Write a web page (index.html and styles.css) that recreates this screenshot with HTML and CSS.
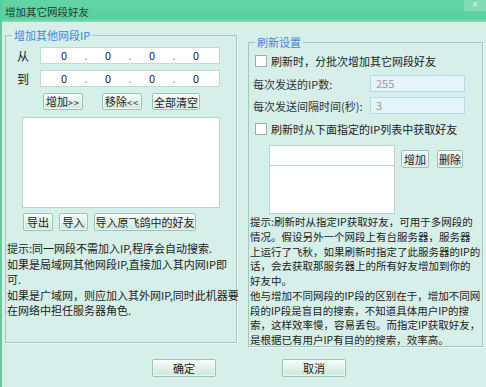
FILE: index.html
```html
<!DOCTYPE html>
<html lang="zh-CN">
<head>
  <meta charset="UTF-8" />
  <title>增加其它网段好友</title>
  <link rel="stylesheet" href="styles.css">
</head>
<body>

  <div class="window">
    <div class="titlebar">
      <span class="title">增加其它网段好友</span>
      <span class="close">×</span>
    </div>

    <div class="main">
      <!-- left: other segments -->
      <div class="group group-left">
        <span class="group-title">增加其他网段IP</span>

        <div class="iprow">
          <span class="iplabel">从</span>
          <div class="ipbox"><span>0</span><i>.</i><span>0</span><i>.</i><span>0</span><i>.</i><span>0</span></div>
        </div>
        <div class="iprow">
          <span class="iplabel">到</span>
          <div class="ipbox"><span>0</span><i>.</i><span>0</span><i>.</i><span>0</span><i>.</i><span>0</span></div>
        </div>

        <div class="btnrow btnrow-top">
          <button class="btn w40">增加<span class="arrows">&gt;&gt;</span></button>
          <button class="btn w40 gap-wide">移除<span class="arrows">&lt;&lt;</span></button>
          <button class="btn w48">全部清空</button>
        </div>

        <div class="listbox list-left"></div>

        <div class="btnrow btnrow-bottom">
          <button class="btn w30">导出</button>
          <button class="btn w29">导入</button>
          <button class="btn w102">导入原飞鸽中的好友</button>
        </div>

        <p class="tip tip-left">提示:同一网段不需加入IP,程序会自动搜索.<br>如果是局域网其他网段IP,直接加入其内网IP即<br>可.<br>如果是广域网，则应加入其外网IP,同时此机器要<br>在网络中担任服务器角色.</p>
      </div>

      <!-- right: refresh settings -->
      <div class="group group-right">
        <span class="group-title">刷新设置</span>

        <label class="check check-first"><span class="box"></span>刷新时，分批次增加其它网段好友</label>

        <div class="field">
          <span class="field-label">每次发送的IP数:</span>
          <div class="field-input">255</div>
        </div>
        <div class="field field-second">
          <span class="field-label">每次发送间隔时间(秒):</span>
          <div class="field-input">3</div>
        </div>

        <label class="check check-second"><span class="box"></span>刷新时从下面指定的IP列表中获取好友</label>

        <div class="iplist">
          <div class="iplist-col">
            <div class="iplist-input"></div>
            <div class="listbox list-right"></div>
          </div>
          <div class="iplist-btns">
            <button class="btn w28">增加</button>
            <button class="btn w26">删除</button>
          </div>
        </div>

        <p class="tip tip-right">提示:刷新时从指定IP获取好友，可用于多网段的<br>情况。假设另外一个网段上有台服务器，服务器<br>上运行了飞秋，如果刷新时指定了此服务器的IP的<br>话，会去获取那服务器上的所有好友增加到你的<br>好友中。<br>他与增加不同网段的IP段的区别在于，增加不同网<br>段的IP段是盲目的搜索，不知道具体用户IP的搜<br>索，这样效率慢，容易丢包。而指定IP获取好友，<br>是根据已有用户IP有目的的搜索，效率高。</p>
      </div>
    </div>

    <div class="footer">
      <button class="btn btn-footer">确定</button>
      <button class="btn btn-footer">取消</button>
    </div>
  </div>

</body>
</html>
```

FILE: styles.css
```css
body {
  margin: 0;
  font-family: "Noto Sans CJK SC", "Liberation Sans", sans-serif;
  font-size: 11px;
  color: #222;
}

.window {
  width: 486px;
  height: 387px;
  box-sizing: border-box;
  background: #d6efe9;
  border-left: 2px solid #5ccf9f;
  display: flex;
  flex-direction: column;
}

.titlebar {
  height: 22px;
  flex-shrink: 0;
  position: relative;
  display: flex;
  align-items: center;
  padding-left: 3px;
  background: linear-gradient(#62d6a7, #5bcf9e 85%, #86dcb9);
}

.title {
  font-size: 10.5px;
  color: #1f3b30;
}

.close {
  position: absolute;
  top: 0;
  right: 0;
  width: 22px;
  height: 11px;
  overflow: hidden;
  line-height: 9px;
  text-align: center;
  font-family: "DejaVu Sans", sans-serif;
  font-size: 9px;
  color: #e6f8f0;
  background: #7fdcb6;
}

.main {
  display: flex;
  align-items: flex-start;
  padding-left: 3px;
}

.group {
  position: relative;
  box-sizing: border-box;
  border: 1px solid #a6c7bd;
  box-shadow: 1px 1px 0 #eef8f5;
}

.group-title {
  position: absolute;
  top: -8px;
  left: 6px;
  padding: 0 2px;
  line-height: 15px;
  background: #d6efe9;
  color: #3d86dc;
}

.group-left {
  margin-top: 13px;
  width: 232px;
  height: 308px;
  padding-top: 11px;
}

.group-right {
  margin-top: 20px;
  margin-left: 11px;
  width: 235px;
  height: 305px;
  padding-top: 11px;
}

/* ip range rows */
.iprow {
  display: flex;
  align-items: center;
  padding-left: 11px;
  margin-bottom: 6px;
}

.iplabel {
  width: 23px;
  font-size: 12px;
}

.ipbox {
  width: 180px;
  height: 17px;
  box-sizing: border-box;
  background: #fff;
  border: 1px solid #bddbd1;
  display: flex;
  align-items: center;
  padding-left: 20px;
  line-height: 15px;
}

.ipbox span {
  width: 6px;
  text-align: center;
}

.ipbox i {
  font-style: normal;
  color: #888;
  width: 38px;
  text-align: center;
}

.btnrow {
  display: flex;
}

.btnrow-top {
  margin-top: 3px;
  padding-left: 37px;
  gap: 10px;
}

.btnrow-top .gap-wide {
  margin-left: 9px;
}

.btnrow-bottom {
  margin-top: 5px;
  padding-left: 17px;
  gap: 6px;
}

.btnrow-bottom .btn {
  height: 18px;
}

.btn {
  height: 17px;
  box-sizing: border-box;
  padding: 0;
  border: 1px solid #98c4b3;
  border-radius: 2px;
  background: linear-gradient(#f7fcfa, #dcefe7 60%, #cfe7dc);
  box-shadow: inset 0 0 0 1px rgba(255, 255, 255, 0.6);
  font-family: inherit;
  font-size: 11px;
  line-height: 14px;
  color: #222;
  cursor: pointer;
}

.arrows {
  letter-spacing: 1px;
  font-size: 9px;
}

.w26 { width: 26px; }
.w28 { width: 28px; }
.w29 { width: 29px; }
.w30 { width: 30px; }
.w40 { width: 40px; }
.w48 { width: 48px; }
.w102 { width: 102px; }

.listbox {
  background: #fff;
  border: 1px solid #b8d7cc;
  box-sizing: border-box;
}

.list-left {
  margin: 7px 0 0 16px;
  width: 198px;
  height: 91px;
}

.tip {
  margin: 0;
  line-height: 15px;
  white-space: nowrap;
  color: #1c1c1c;
}

.tip-left {
  margin-top: 10px;
  padding-left: 1px;
  line-height: 15.5px;
}

/* refresh settings */
.check {
  display: flex;
  align-items: center;
  gap: 4px;
  padding-left: 6px;
  line-height: 14px;
}

.check-first {
  margin-top: 0;
}

.check-second {
  margin-top: 8px;
}

.box {
  width: 10px;
  height: 10px;
  background: #fff;
  border: 1px solid #8fb3a7;
  flex-shrink: 0;
}

.field {
  display: flex;
  align-items: center;
  padding-left: 4px;
  margin-top: 7px;
}

.field-second {
  margin-top: 5px;
}

.field-label {
  width: 117px;
  color: #333;
}

.field-input {
  width: 95px;
  height: 17px;
  box-sizing: border-box;
  background: #e4f4fb;
  border: 1px solid #b6d9e6;
  padding-left: 5px;
  line-height: 15px;
  color: #9a9a9a;
}

.iplist {
  display: flex;
  margin-top: 9px;
  padding-left: 20px;
}

.iplist-input {
  width: 126px;
  height: 21px;
  box-sizing: border-box;
  background: #fff;
  border: 1px solid #b8d7cc;
}

.list-right {
  width: 126px;
  height: 48px;
  border-top: none;
}

.iplist-btns {
  display: flex;
  gap: 8px;
  margin: 5px 0 0 6px;
}

.iplist-btns .btn {
  height: 18px;
}

.tip-right {
  margin-top: 1px;
  padding-left: 1px;
  font-size: 10.5px;
  line-height: 14.75px;
}

.footer {
  display: flex;
  gap: 66px;
  padding-left: 150px;
  margin-top: 12px;
}

.btn-footer {
  width: 64px;
  height: 18px;
}
```
